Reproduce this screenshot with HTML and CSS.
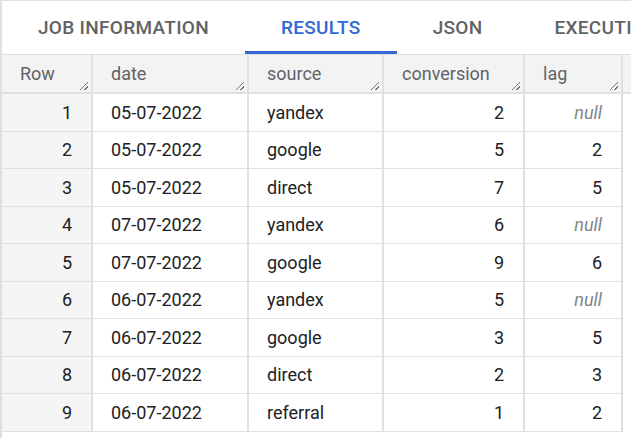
FILE: index.html
```html
<!DOCTYPE html>
<html lang="en">
<head>
    <meta charset="UTF-8">
    <title>Query results</title>
    <link rel="stylesheet" href="styles.css">
</head>
<body>
    <div class="panel">
        <div class="tabs">
            <div class="tab">Job information</div>
            <div class="tab active">Results</div>
            <div class="tab">JSON</div>
            <div class="tab">Execution details</div>
        </div>

        <div class="grid-head">
            <div class="th">Row<span class="grip"></span></div>
            <div class="th">date<span class="grip"></span></div>
            <div class="th">source<span class="grip"></span></div>
            <div class="th">conversion<span class="grip"></span></div>
            <div class="th">lag<span class="grip"></span></div>
            <div class="th th-rest"></div>
        </div>

        <div class="grid-body" id="rows"></div>
    </div>

    <script>
        // result rows of the query
        const rows = [
            ['05-07-2022', 'yandex', 2, null],
            ['05-07-2022', 'google', 5, 2],
            ['05-07-2022', 'direct', 7, 5],
            ['07-07-2022', 'yandex', 6, null],
            ['07-07-2022', 'google', 9, 6],
            ['06-07-2022', 'yandex', 5, null],
            ['06-07-2022', 'google', 3, 5],
            ['06-07-2022', 'direct', 2, 3],
            ['06-07-2022', 'referral', 1, 2]
        ];

        const body = document.getElementById('rows');
        rows.forEach((r, i) => {
            const tr = document.createElement('div');
            tr.className = 'tr';
            const lag = r[3] === null
                ? '<div class="td num null">null</div>'
                : `<div class="td num">${r[3]}</div>`;
            tr.innerHTML = `
                <div class="td num rownum">${i + 1}</div>
                <div class="td">${r[0]}</div>
                <div class="td">${r[1]}</div>
                <div class="td num">${r[2]}</div>
                ${lag}
            `;
            body.appendChild(tr);
        });
    </script>
</body>
</html>
```

FILE: styles.css
```css
* {
    margin: 0;
    padding: 0;
    box-sizing: border-box;
}

body {
    font-family: Roboto, 'Liberation Sans', sans-serif;
    background: #fff;
    color: #202124;
    overflow: hidden;
}

.panel {
    border-left: 2px solid #e0e0e0;
    border-top: 1px solid #e0e0e0;
    height: 438px;
    width: 631px;
    overflow: hidden;
}

.tabs {
    display: flex;
    height: 53px;
}

.tab {
    padding: 0 36px;
    display: flex;
    align-items: center;
    padding-top: 3px;
    font-size: 19px;
    font-weight: 500;
    text-transform: uppercase;
    letter-spacing: 0.3px;
    color: #5f6368;
    white-space: nowrap;
    border-bottom: 3px solid transparent;
}

.tab.active {
    color: #3367d6;
    border-bottom-color: #3367d6;
}

.grid-head,
.tr {
    display: grid;
    grid-template-columns: 91px 156px 135px 141px 98px;
}

.grid-head {
    grid-template-columns: 91px 156px 135px 141px 98px 1fr;
    background: #f3f3f3;
    border-top: 1px solid #e0e0e0;
    border-bottom: 2px solid #e0e0e0;
    height: 40px;
}

.th {
    position: relative;
    display: flex;
    align-items: center;
    padding: 0 18px;
    font-size: 18px;
    color: #5f6368;
    border-right: 2px solid #e0e0e0;
}

.th-rest {
    border-right: none;
}

.grip {
    position: absolute;
    right: 3px;
    bottom: 2px;
    width: 8px;
    height: 8px;
    background: linear-gradient(135deg,
        transparent 44%, #777 44%, #777 54%, transparent 54%,
        transparent 72%, #777 72%, #777 82%, transparent 82%);
}

.grid-body {
    width: 623px;
}

.tr {
    height: 37.5px;
}

.td {
    display: flex;
    align-items: center;
    padding: 0 18px;
    font-size: 18px;
    border-right: 2px solid #e0e0e0;
    border-bottom: 1px solid #e0e0e0;
}

.num {
    justify-content: flex-end;
    padding-right: 19px;
}

.rownum {
    background: #f5f5f5;
}

.null {
    font-style: italic;
    color: #80868b;
}
```
